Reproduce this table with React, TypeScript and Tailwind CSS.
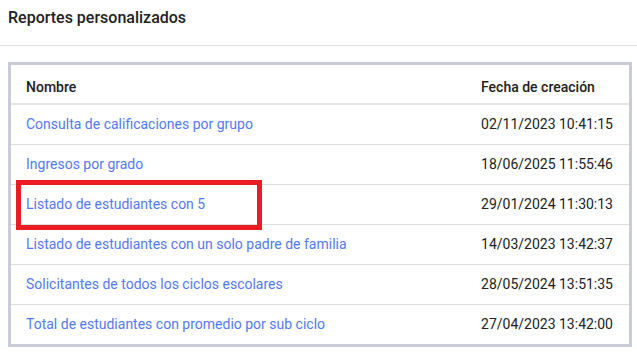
import React from 'react';

const rows: [string, string][] = [
  ['Consulta de calificaciones por grupo', '02/11/2023 10:41:15'],
  ['Ingresos por grado', '18/06/2025 11:55:46'],
  ['Listado de estudiantes con 5', '29/01/2024 11:30:13'],
  ['Listado de estudiantes con un solo padre de familia', '14/03/2023 13:42:37'],
  ['Solicitantes de todos los ciclos escolares', '28/05/2024 13:51:35'],
  ['Total de estudiantes con promedio por sub ciclo', '27/04/2023 13:42:00'],
];

export default function App() {
  return (
    <div
      className="relative w-[637px] h-[352px] bg-white overflow-hidden text-[#212121]"
      style={{ fontFamily: 'Roboto, "Liberation Sans", sans-serif' }}
    >
      <div className="h-[46px] border-b border-[#e3e3e3] px-2 pt-[8px]">
        <h1 className="text-[16px] leading-[20px] font-medium">Reportes personalizados</h1>
      </div>

      <div className="mt-[16px] ml-2 mr-[5px] border-[3px] border-[#c9ccd7]">
        <table className="w-full border-collapse text-[14px] leading-[20px]">
          <thead>
            <tr className="border-b-2 border-[#e6e6e6]">
              <th className="pt-[12px] pb-[6px] pl-[15px] pr-4 text-left font-medium">Nombre</th>
              <th className="w-[1%] pt-[12px] pb-[6px] px-4 text-left font-medium whitespace-nowrap">Fecha de creación</th>
            </tr>
          </thead>
          <tbody>
            {rows.map(([name, date], i) => (
              <tr key={name} className={i > 0 ? 'border-t border-[#dedede]' : ''}>
                <td className="h-[40px] pl-[15px] pr-4 text-[#5479f2]">{name}</td>
                <td className="h-[40px] px-4 whitespace-nowrap">{date}</td>
              </tr>
            ))}
          </tbody>
        </table>
      </div>

      <div className="absolute left-[16px] top-[180px] w-[246px] h-[50px] border-[5px] border-[#ec1c24]" />
    </div>
  );
}
